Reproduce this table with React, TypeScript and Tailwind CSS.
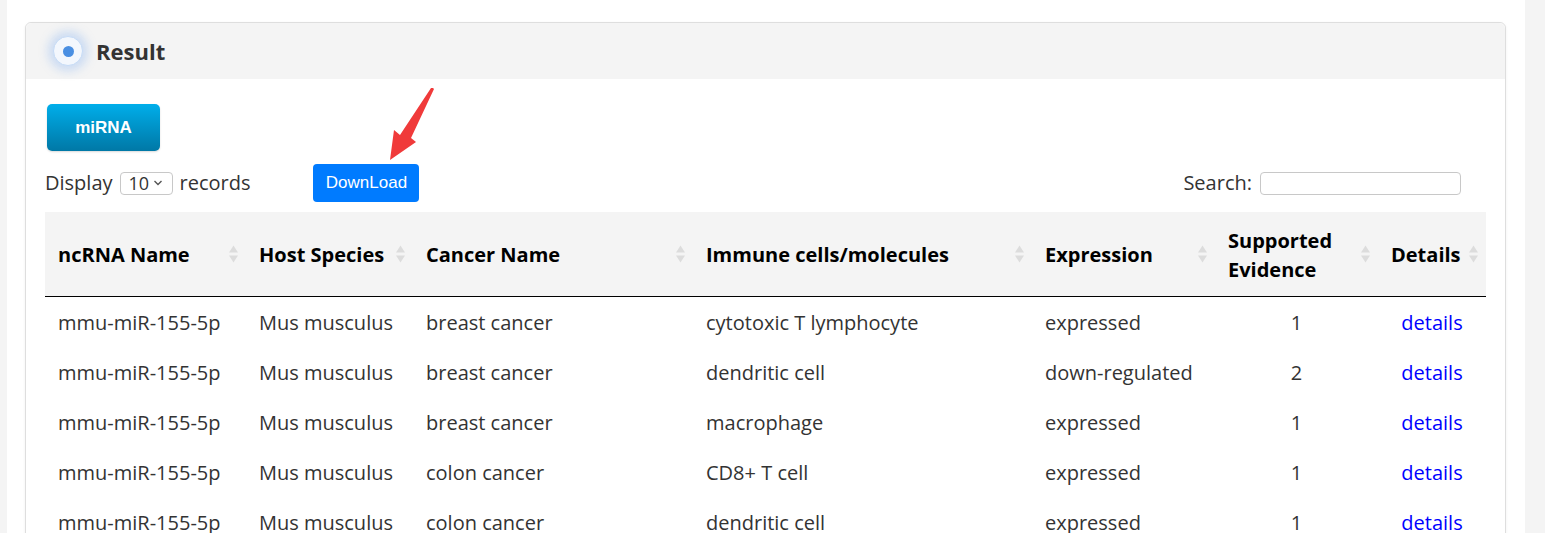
import React from "react";

const rows = [
  ["mmu-miR-155-5p", "Mus musculus", "breast cancer", "cytotoxic T lymphocyte", "expressed", "1"],
  ["mmu-miR-155-5p", "Mus musculus", "breast cancer", "dendritic cell", "down-regulated", "2"],
  ["mmu-miR-155-5p", "Mus musculus", "breast cancer", "macrophage", "expressed", "1"],
  ["mmu-miR-155-5p", "Mus musculus", "colon cancer", "CD8+ T cell", "expressed", "1"],
  ["mmu-miR-155-5p", "Mus musculus", "colon cancer", "dendritic cell", "expressed", "1"],
];

const headers = [
  "ncRNA Name",
  "Host Species",
  "Cancer Name",
  "Immune cells/molecules",
  "Expression",
  "Supported Evidence",
  "Details",
];

const widths = [201, 167, 280, 339, 183, 163, 108];

function SortIcon() {
  return (
    <svg width="9" height="19" viewBox="0 0 9 19" className="absolute right-[8px] top-1/2 -translate-y-1/2">
      <polygon points="4.5,1 9,8 0,8" fill="#dcdcdc" />
      <polygon points="0,11 9,11 4.5,18" fill="#dcdcdc" />
    </svg>
  );
}

export default function App() {
  return (
    <div
      className="flex w-[1545px] h-[533px] overflow-hidden bg-white"
      style={{ fontFamily: '"Open Sans", "Noto Sans", sans-serif' }}
    >
      <div className="w-[7px] shrink-0 bg-[#f4f4f4]" />
      <div className="flex-1 pt-[22px] pl-[18px] pr-[19px] relative">
        <div className="rounded-[6px] border border-[#dedede] shadow-[0_1px_3px_rgba(0,0,0,0.06)] bg-white">
          <div className="h-[56px] bg-[#f4f4f4] rounded-t-[6px] flex items-center pl-[27px]">
            <div className="w-[30px] h-[30px] rounded-full bg-[#f3f7fd] border border-[#c6dbf6] shadow-[0_0_10px_5px_rgba(130,175,240,0.35)] flex items-center justify-center">
              <div className="w-[11px] h-[11px] rounded-full bg-[#4a8fe2]" />
            </div>
            <span className="ml-[13px] text-[22px] font-bold text-[#333] leading-none">Result</span>
          </div>
          <div className="px-[19px] pt-[25px] pb-[20px]">
            <button
              className="ml-[2px] w-[113px] h-[47px] rounded-[5px] bg-gradient-to-b from-[#00aeea] to-[#0078a6] text-white text-[17px] font-bold flex items-center justify-center shadow-[0_1px_2px_rgba(0,0,0,0.15)]"
              style={{ fontFamily: '"Liberation Sans", Arial, sans-serif' }}
            >
              miRNA
            </button>
            <div className="mt-[13px] h-[38px] flex items-center text-[20px] text-[#333]">
              <span>Display</span>
              <div className="ml-[7px] w-[53px] h-[23px] border border-[#c8c8c8] rounded-[4px] flex items-center pl-[8px] text-[18px] leading-none">
                <span>10</span>
                <svg width="10" height="8" viewBox="0 0 10 8" className="ml-[4px]">
                  <polyline points="1.5,2 5,5.5 8.5,2" fill="none" stroke="#555" strokeWidth="1.4" />
                </svg>
              </div>
              <span className="ml-[7px]">records</span>
              <button
                className="ml-[63px] w-[106px] h-[38px] rounded-[4px] bg-[#007bff] text-white text-[17px] flex items-center justify-center"
                style={{ fontFamily: '"Liberation Sans", Arial, sans-serif' }}
              >
                DownLoad
              </button>
              <div className="flex-1" />
              <span>Search:</span>
              <div className="ml-[8px] mr-[25px] w-[201px] h-[23px] border border-[#c8c8c8] rounded-[4px]" />
            </div>
            <table className="mt-[10px] w-[1441px] table-fixed border-collapse">
              <colgroup>
                {widths.map((w, i) => (
                  <col key={i} style={{ width: w }} />
                ))}
              </colgroup>
              <thead>
                <tr className="bg-[#f4f4f4] h-[84px] border-b border-black">
                  {headers.map((h) => (
                    <th
                      key={h}
                      className="relative text-left align-middle pl-[13px] pr-[24px] pt-[2px] text-[20px] font-bold text-black leading-[29px]"
                    >
                      {h}
                      <SortIcon />
                    </th>
                  ))}
                </tr>
              </thead>
              <tbody>
                {rows.map((r, i) => (
                  <tr key={i} className="h-[50px] text-[20px] text-[#333]">
                    <td className="pl-[13px] pt-[4px] leading-[30px]">{r[0]}</td>
                    <td className="pl-[13px] pt-[4px] leading-[30px]">{r[1]}</td>
                    <td className="pl-[13px] pt-[4px] leading-[30px]">{r[2]}</td>
                    <td className="pl-[13px] pt-[4px] leading-[30px]">{r[3]}</td>
                    <td className="pl-[13px] pt-[4px] leading-[30px]">{r[4]}</td>
                    <td className="text-center pt-[4px] leading-[30px]">{r[5]}</td>
                    <td className="text-center pt-[4px] leading-[30px] text-[#0000ff]">details</td>
                  </tr>
                ))}
              </tbody>
            </table>
          </div>
        </div>
        <svg
          width="60"
          height="80"
          viewBox="0 0 60 80"
          className="absolute left-[376px] top-[84px] pointer-events-none"
        >
          <polygon
            points="50,4 51,5 28,54 33,58 7,76 11,46 17,51 48,4"
            fill="#f03a3a"
          />
        </svg>
      </div>
      <div className="w-[20px] shrink-0 bg-[#f4f4f4]" />
    </div>
  );
}
